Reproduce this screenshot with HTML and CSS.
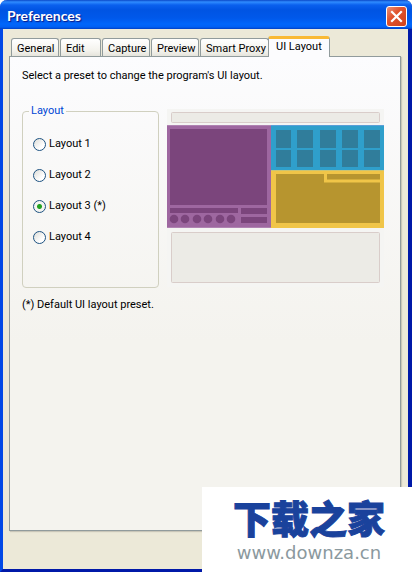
FILE: index.html
```html
<!DOCTYPE html>
<html lang="en">
<head>
  <meta charset="UTF-8" />
  <meta name="viewport" content="width=device-width, initial-scale=1.0"/>
  <title>Preferences</title>
  <link rel="stylesheet" href="styles.css">
</head>

<body>

  <div class="window">
    <header class="title-bar">
      <h1>Preferences</h1>
      <button type="button" class="close-btn" aria-label="Close">
        <svg width="13" height="13" viewBox="0 0 13 13"><path d="M2 2 L11 11 M11 2 L2 11" stroke="#fff" stroke-width="2.2" stroke-linecap="square"/></svg>
      </button>
    </header>

    <main class="window-body">
      <div class="tabs" role="tablist">
        <button type="button" class="tab" role="tab">General</button>
        <button type="button" class="tab tab-edit" role="tab">Edit</button>
        <button type="button" class="tab" role="tab">Capture</button>
        <button type="button" class="tab" role="tab">Preview</button>
        <button type="button" class="tab tab-proxy" role="tab">Smart Proxy</button>
        <button type="button" class="tab active" role="tab" aria-selected="true">UI Layout</button>
      </div>

      <section class="panel" role="tabpanel">
        <p class="intro">Select a preset to change the program's UI layout.</p>

        <div class="preset-row">
          <fieldset class="layouts">
            <legend>Layout</legend>
            <label for="layout1"><input type="radio" id="layout1" name="layout">Layout 1</label>
            <label for="layout2"><input type="radio" id="layout2" name="layout">Layout 2</label>
            <label for="layout3"><input type="radio" id="layout3" name="layout" checked>Layout 3 (*)</label>
            <label for="layout4"><input type="radio" id="layout4" name="layout">Layout 4</label>
          </fieldset>

          <!-- Thumbnail of the selected layout -->
          <svg class="thumb" width="217" height="178" viewBox="0 0 217 178" role="img" aria-label="Layout 3 preview">
            <rect width="217" height="178" fill="#f5f5f3"/>
            <rect x="4.500" y="3.500" width="208" height="10" rx="1" fill="#ecebe6" stroke="#d9cdca"/>

            <!-- player -->
            <rect y="16" width="104" height="103" fill="#9e67a0"/>
            <path d="M0 16.500H104M0 118.500H104" stroke="#b083b2"/>
            <rect x="3" y="20" width="97" height="76" fill="#7b457c"/>
            <g fill="#7b457c">
              <rect x="3" y="99" width="68" height="5"/>
              <rect x="74" y="99" width="26" height="6"/>
              <rect x="74" y="108" width="26" height="6"/>
              <circle cx="7" cy="110" r="4.300"/>
              <circle cx="18" cy="110" r="4.300"/>
              <circle cx="30" cy="110" r="4.300"/>
              <circle cx="41" cy="110" r="4.300"/>
              <circle cx="53" cy="110" r="4.300"/>
              <circle cx="64" cy="110" r="4.300"/>
            </g>

            <!-- library -->
            <rect x="104" y="16" width="113" height="45" fill="#2f9fcb"/>
            <path d="M104 16.500H217" stroke="#5a9fd8"/>
            <g fill="#307d9b">
              <rect x="109" y="21" width="15" height="18"/>
              <rect x="130" y="21" width="16" height="18"/>
              <rect x="153" y="21" width="16" height="18"/>
              <rect x="175" y="21" width="16" height="18"/>
              <rect x="197" y="21" width="16" height="18"/>
              <rect x="109" y="41" width="15" height="17"/>
              <rect x="130" y="41" width="16" height="17"/>
              <rect x="153" y="41" width="16" height="17"/>
              <rect x="175" y="41" width="16" height="17"/>
              <rect x="197" y="41" width="16" height="17"/>
            </g>

            <!-- options -->
            <rect x="104" y="61" width="113" height="58" fill="#f0c548"/>
            <path d="M104 61.500H217" stroke="#c9c476"/>
            <rect x="109" y="65" width="104" height="49" fill="#b7952f"/>
            <path d="M158.500 65V72H213" fill="none" stroke="#f0c548" stroke-width="3"/>

            <rect x="4.500" y="123.500" width="208" height="50" rx="1" fill="#ecebe6" stroke="#d9cdca"/>
          </svg>
        </div>

        <p class="note">(*) Default UI layout preset.</p>
      </section>
    </main>

    <div class="watermark">
      <strong lang="zh-CN">下载之家</strong>
      <span>www.downza.cn</span>
    </div>
  </div>

</body>
</html>
```
FILE: styles.css
```css
* {
  box-sizing: border-box;
}

body {
  margin: 0;
  background-color: #fff;
  font-family: Roboto, "Liberation Sans", sans-serif;
  font-size: 11px;
  line-height: 14px;
  color: #000;
}

.window {
  position: relative;
  display: flex;
  flex-direction: column;
  min-height: 100vh;
  border: solid #0148e6;
  border-width: 0 4px 3px 3px;
  border-right-color: #0019a8;
  border-bottom-color: #0019a8;
  border-radius: 7px 7px 0 0;
  background-color: #ece9d8;
}

.title-bar {
  display: flex;
  align-items: center;
  justify-content: space-between;
  height: 29px;
  margin: 0 -4px 0 -3px;
  padding: 3px 5px 0 7px;
  border-radius: 7px 7px 0 0;
  background: linear-gradient(#0a48c8 0, #2f8cff 2px, #0a60ee 5px, #0054e3 10px, #0058ea 18px, #0066fb 24px, #0060f4 27px, #003fc4 29px);
}

.title-bar h1 {
  margin: 0;
  font-family: Lato, "Open Sans", sans-serif;
  font-size: 14px;
  line-height: 16px;
  color: #fff;
  text-shadow: 1px 1px 1px #0a1883;
}

.close-btn {
  display: flex;
  align-items: center;
  justify-content: center;
  width: 21px;
  height: 21px;
  padding: 0;
  border: 1px solid #fff;
  border-radius: 3px;
  background: linear-gradient(135deg, #eb9076, #e0532d 40%, #d0421c);
}

.window-body {
  display: flex;
  flex: 1;
  flex-direction: column;
  padding: 7px 7px 38px 6px;
}

.tabs {
  display: flex;
  align-items: flex-end;
  height: 20px;
  padding-left: 2px;
}

.tab {
  height: 18px;
  min-width: 48px;
  margin-right: 1px;
  padding: 2px 0 0 5px;
  border: 1px solid #919b9c;
  border-bottom: 0;
  border-radius: 3px 3px 0 0;
  background: linear-gradient(#fff, #f3f2ec 70%, #e6e4dc);
  font: inherit;
  color: inherit;
  text-align: left;
  white-space: nowrap;
}

.tab-edit {
  min-width: 41px;
}

.tab-proxy {
  min-width: 69px;
  margin-right: 0;
}

.tab.active {
  position: relative;
  height: 21px;
  min-width: 62px;
  margin: 0 0 -1px -1px;
  padding: 0 5px 3px 7px;
  border-top: 3px solid #f9b934;
  background: #fcfcfe;
}

.panel {
  flex: 1;
  padding: 12px 16px 0 12px;
  border: 1px solid #919b9c;
  background: linear-gradient(#fcfcfe, #f4f3ee 60%, #f4f3ee);
  box-shadow: 1px 1px 1px #c9c6b8;
}

.intro,
.note {
  margin: 0;
}

.preset-row {
  display: flex;
  gap: 8px;
  margin-top: 21px;
}

.layouts {
  display: flex;
  flex: none;
  flex-direction: column;
  gap: 17px;
  width: 137px;
  height: 184px;
  margin: 0;
  padding: 19px 10px 0;
  border: 1px solid #d0d0bf;
  border-radius: 4px;
}

.layouts legend {
  margin-left: -4px;
  padding: 0 2px;
  color: #0046d5;
}

.layouts label {
  display: flex;
  align-items: center;
  gap: 3px;
}

.layouts input {
  appearance: none;
  width: 13px;
  height: 13px;
  margin: 0;
  border: 1px solid #1d5281;
  border-radius: 50%;
  background: linear-gradient(135deg, #dcdcd7, #fff 70%);
}

.layouts input:checked {
  background: radial-gradient(circle, #21a121 2px, #f4f4f2 3px);
}

.thumb {
  flex: none;
  margin-top: 5px;
}

.note {
  margin-top: 10px;
}

.watermark {
  position: absolute;
  right: -4px;
  bottom: -3px;
  display: flex;
  flex-direction: column;
  gap: 4px;
  align-items: center;
  width: 210px;
  height: 85px;
  padding: 10px 0 0 4px;
  background-color: #fff;
}

.watermark strong {
  font-family: "Noto Sans CJK SC", sans-serif;
  font-size: 38px;
  font-weight: 900;
  line-height: 40px;
  color: #1a429c;
  -webkit-text-stroke: 1px #1a429c;
}

.watermark span {
  font-family: "DejaVu Sans", sans-serif;
  font-size: 18px;
  line-height: 24px;
  color: #8b999e;
}
```
